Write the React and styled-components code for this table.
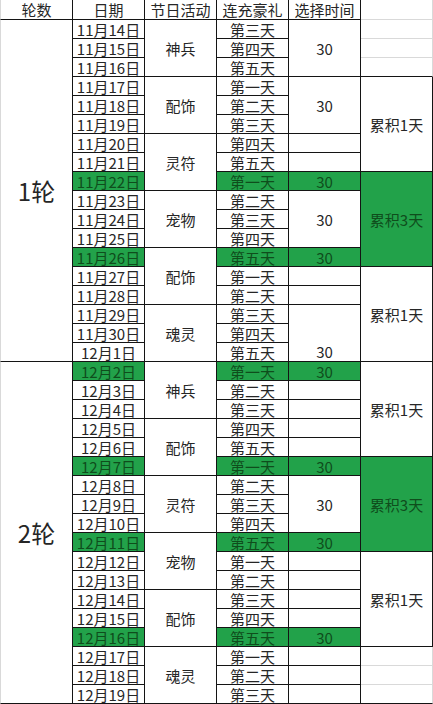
import React from 'react';
import styled, { createGlobalStyle } from 'styled-components';

const GREEN = '#22a24a';
const GREEN_TEXT = '#0f4d1c';
const GRID = '#d9d9d9';
const LINE = '#141414';

const GlobalStyle = createGlobalStyle`
  html, body {
    margin: 0;
    padding: 0;
    background: #fff;
  }
  body {
    font-family: "Noto Sans CJK SC", "Noto Sans", sans-serif;
    color: #222;
  }
`;

const Sheet = styled.div`
  display: grid;
  grid-template-columns: 73px repeat(5, 72px);
  grid-template-rows: 20px repeat(36, 19px);
  width: 433px;
`;

const Cell = styled.div`
  box-sizing: border-box;
  display: flex;
  align-items: ${(p) => (p.$bottom ? 'flex-end' : 'center')};
  justify-content: center;
  grid-row: ${(p) => p.$row} / span ${(p) => p.$span || 1};
  padding-top: 1px;
  font-size: 15px;
  line-height: 18px;
  white-space: nowrap;
  border-right: 1px solid ${(p) => (p.$soft ? GRID : LINE)};
  border-bottom: 1px solid ${(p) => (p.$softBottom ? GRID : LINE)};
  background: ${(p) => (p.$green ? GREEN : '#fff')};
  color: ${(p) => (p.$green ? GREEN_TEXT : '#262626')};
`;

const HeadCell = styled(Cell)`
  grid-column: ${(p) => p.$col};
  ${(p) => p.$col === 1 && `border-left: 1px solid ${GRID};`}
`;

const RoundCell = styled(Cell)`
  grid-column: 1;
  border-left: 1px solid ${GRID};
  font-size: 24px;
  line-height: 28px;
`;

const DateCell = styled(Cell)`
  grid-column: 2;
`;

const EventCell = styled(Cell)`
  grid-column: 3;
`;

const DayCell = styled(Cell)`
  grid-column: 4;
`;

const TimeCell = styled(Cell)`
  grid-column: 5;
`;

const BonusCell = styled(Cell)`
  grid-column: 6;
`;

const headers = ['轮数', '日期', '节日活动', '连充豪礼', '选择时间', ''];

const dates = [
  ...Array.from({ length: 17 }, (_, i) => `11月${14 + i}日`),
  ...Array.from({ length: 19 }, (_, i) => `12月${i + 1}日`),
];

const dayNames = ['第一天', '第二天', '第三天', '第四天', '第五天'];
const greenRows = [8, 12, 18, 23, 27, 32];

const events = ['神兵', '配饰', '灵符', '宠物', '配饰', '魂灵', '神兵', '配饰', '灵符', '宠物', '配饰', '魂灵'];

// [start row, span, value, text at bottom]
const times = [
  [0, 3, '30'], [3, 3, '30'], [6, 1, ''], [7, 1, ''], [8, 1, '30'],
  [9, 3, '30'], [12, 1, '30'], [13, 1, ''], [14, 1, ''], [15, 3, '30', true],
  [18, 1, '30'], [19, 1, ''], [20, 1, ''], [21, 1, ''], [22, 1, ''],
  [23, 1, '30'], [24, 3, '30'], [27, 1, '30'], [28, 1, ''], [29, 1, ''],
  [30, 1, ''], [31, 1, ''], [32, 1, '30'], [33, 1, ''], [34, 1, ''], [35, 1, ''],
];

// [start row, span, label, kind]
const bonuses = [
  [0, 1, '', 'empty'], [1, 1, '', 'empty'], [2, 1, '', 'edge'],
  [3, 5, '累积1天', 'box'], [8, 5, '累积3天', 'green'], [13, 5, '累积1天', 'box'],
  [18, 5, '累积1天', 'box'], [23, 5, '累积3天', 'green'], [28, 5, '累积1天', 'box'],
  [33, 1, '', 'empty'], [34, 1, '', 'empty'], [35, 1, '', 'edge'],
];

export default function App() {
  return (
    <>
      <GlobalStyle />
      <Sheet>
        {headers.map((h, i) => (
          <HeadCell key={i} $row={1} $col={i + 1} $soft={i === 5} $softBottom={i === 5}>
            {h}
          </HeadCell>
        ))}

        <RoundCell $row={2} $span={18}>1轮</RoundCell>
        <RoundCell $row={20} $span={18}>2轮</RoundCell>

        {dates.map((d, i) => (
          <DateCell key={d} $row={i + 2} $green={greenRows.includes(i)}>
            {d}
          </DateCell>
        ))}

        {events.map((e, i) => (
          <EventCell key={i} $row={i * 3 + 2} $span={3}>
            {e}
          </EventCell>
        ))}

        {dates.map((d, i) => (
          <DayCell key={d} $row={i + 2} $green={greenRows.includes(i)}>
            {dayNames[(i + 2) % 5]}
          </DayCell>
        ))}

        {times.map(([start, span, value, bottom]) => (
          <TimeCell
            key={start}
            $row={start + 2}
            $span={span}
            $bottom={bottom}
            $green={greenRows.includes(start)}
          >
            {value}
          </TimeCell>
        ))}

        {bonuses.map(([start, span, label, kind]) => (
          <BonusCell
            key={start}
            $row={start + 2}
            $span={span}
            $green={kind === 'green'}
            $soft={kind === 'empty' || kind === 'edge'}
            $softBottom={kind === 'empty'}
          >
            {label}
          </BonusCell>
        ))}
      </Sheet>
    </>
  );
}
